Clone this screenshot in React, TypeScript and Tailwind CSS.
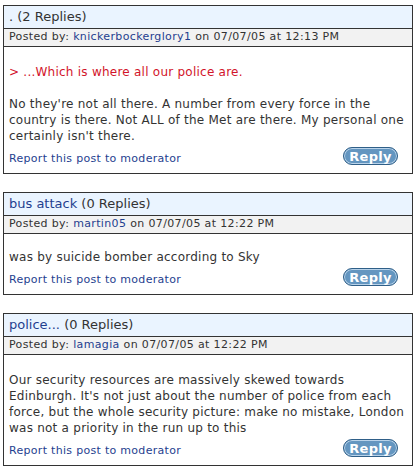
import React from "react";

const font = { fontFamily: '"DejaVu Sans", Verdana, sans-serif' };

function ReplyButton() {
  return (
    <div className="flex h-[18px] w-[55px] items-center justify-center rounded-full border border-[#2f5f88] bg-[#6496c0] text-[13px] font-bold leading-none text-white shadow-[inset_0_0_0_1px_#b9d3ea]">
      Reply
    </div>
  );
}

function Post({
  title,
  titleLink,
  replies,
  user,
  time,
  children,
  padTop,
}: {
  title: string;
  titleLink: boolean;
  replies: string;
  user: string;
  time: string;
  children: React.ReactNode;
  padTop: string;
}) {
  return (
    <div className="ml-[3px] w-[410px] border border-[#333]">
      <div className="flex h-[23px] items-center border-b border-[#333] bg-[#eaf4ff] px-[5px] text-[13px] text-[#333]">
        <span className={titleLink ? "text-[#1f3f8f]" : "text-[#333]"}>{title}</span>
        <span>&nbsp;{replies}</span>
      </div>
      <div className="flex h-[18px] items-center border-b border-[#333] bg-[#f2f2f2] px-[5px] text-[11px] tracking-[0.36px] text-[#333]">
        Posted by:&nbsp;<span className="text-[#1f3f8f]">{user}</span>&nbsp;on 07/07/05 at {time}
      </div>
      <div className={`pl-[5px] pr-[1px] pb-[6px] ${padTop} text-[12px] leading-[16px] tracking-[0.24px] text-[#333]`}>
        {children}
        <div className="mt-[3px] flex items-start justify-between pr-[13px]">
          <span className="mt-[4px] text-[11px] leading-[16px] tracking-[0.3px] text-[#1f3f8f]">Report this post to moderator</span>
          <ReplyButton />
        </div>
      </div>
    </div>
  );
}

export default function App() {
  return (
    <div className="min-h-[474px] w-[418px] bg-white pt-[5px]" style={font}>
      <Post title="." titleLink={false} replies="(2 Replies)" user="knickerbockerglory1" time="12:13 PM" padTop="pt-[17px]">
        <p className="text-[#d2142a]">&gt; ...Which is where all our police are.</p>
        <p className="mt-[16px]">
          No they're not all there. A number from every force in the country is there. Not ALL of the Met are there. My personal one certainly isn't there.
        </p>
      </Post>
      <div className="h-[18px]" />
      <Post title="bus attack" titleLink={true} replies="(0 Replies)" user="martin05" time="12:22 PM" padTop="pt-[15px]">
        <p>was by suicide bomber according to Sky</p>
      </Post>
      <div className="h-[18px]" />
      <Post title="police..." titleLink={true} replies="(0 Replies)" user="lamagia" time="12:22 PM" padTop="pt-[17px]">
        <p>
          Our security resources are massively skewed towards Edinburgh. It's not just about the number of police from each force, but the whole security picture: make no mistake, London was not a priority in the run up to this
        </p>
      </Post>
    </div>
  );
}
